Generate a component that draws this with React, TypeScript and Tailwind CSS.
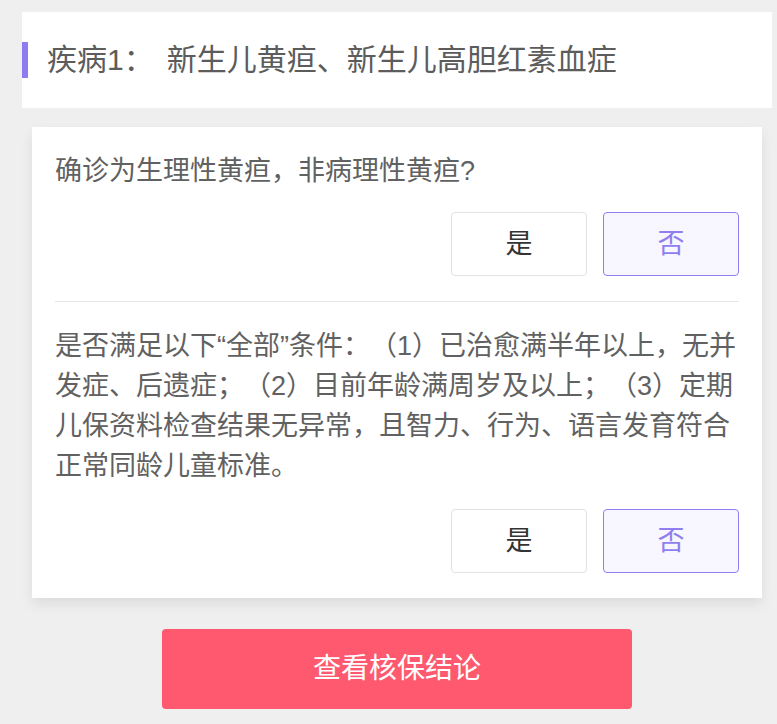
export default function App() {
    const font = {
        fontFamily: '"Liberation Sans", "Noto Sans CJK SC", sans-serif',
    };

    return (
        <div
            className="min-h-screen bg-[#efefef] pt-[12px] pb-[16px] [text-spacing-trim:space-all]"
            style={font}
        >
            <div className="ml-[22px] w-[750px]">

                {/* header */}
                <div className="flex h-[96px] items-center bg-white">
                    <div className="h-[36px] w-[6px] bg-[#8c7cf0]" />
                    <h1 className="ml-[19px] flex text-[30px] leading-[40px] text-[#5c5c5c]">
                        <span>疾病1：</span>
                        <span className="ml-[13px]">新生儿黄疸、新生儿高胆红素血症</span>
                    </h1>
                </div>

                {/* questions */}
                <div className="mx-[10px] mt-[19px] bg-white px-[23px] shadow-[0_6px_12px_rgba(0,0,0,0.08)]">

                    <div className="border-b border-[#e6e6e6] pt-[24px] pb-[25px]">
                        <p className="text-[27px] leading-[40px] text-[#616161]">
                            确诊为生理性黄疸，非病理性黄疸?
                        </p>
                        <div className="mt-[21px] flex justify-end gap-[16px]">
                            <button className="h-[64px] w-[136px] rounded-[4px] border border-[#e2e2e2] bg-white text-[27px] text-[#333]">
                                是
                            </button>
                            <button className="h-[64px] w-[136px] rounded-[4px] border border-[#8f80f2] bg-[#f8f6ff] text-[27px] text-[#8f7ef0]">
                                否
                            </button>
                        </div>
                    </div>

                    <div className="pt-[24px] pb-[25px]">
                        <p className="text-[27px] leading-[40px] text-[#616161]">
                            是否满足以下“全部”条件：（1）已治愈满半年以上，无并发症、后遗症；（2）目前年龄满周岁及以上；（3）定期儿保资料检查结果无异常，且智力、行为、语言发育符合正常同龄儿童标准。
                        </p>
                        <div className="mt-[23px] flex justify-end gap-[16px]">
                            <button className="h-[64px] w-[136px] rounded-[4px] border border-[#e2e2e2] bg-white text-[27px] text-[#333]">
                                是
                            </button>
                            <button className="h-[64px] w-[136px] rounded-[4px] border border-[#8f80f2] bg-[#f8f6ff] text-[27px] text-[#8f7ef0]">
                                否
                            </button>
                        </div>
                    </div>

                </div>

                {/* submit */}
                <div className="mt-[31px] flex justify-center">
                    <button className="h-[80px] w-[470px] rounded-[4px] bg-[#ff596f] text-[28px] text-white">
                        查看核保结论
                    </button>
                </div>

            </div>
        </div>
    );
}
